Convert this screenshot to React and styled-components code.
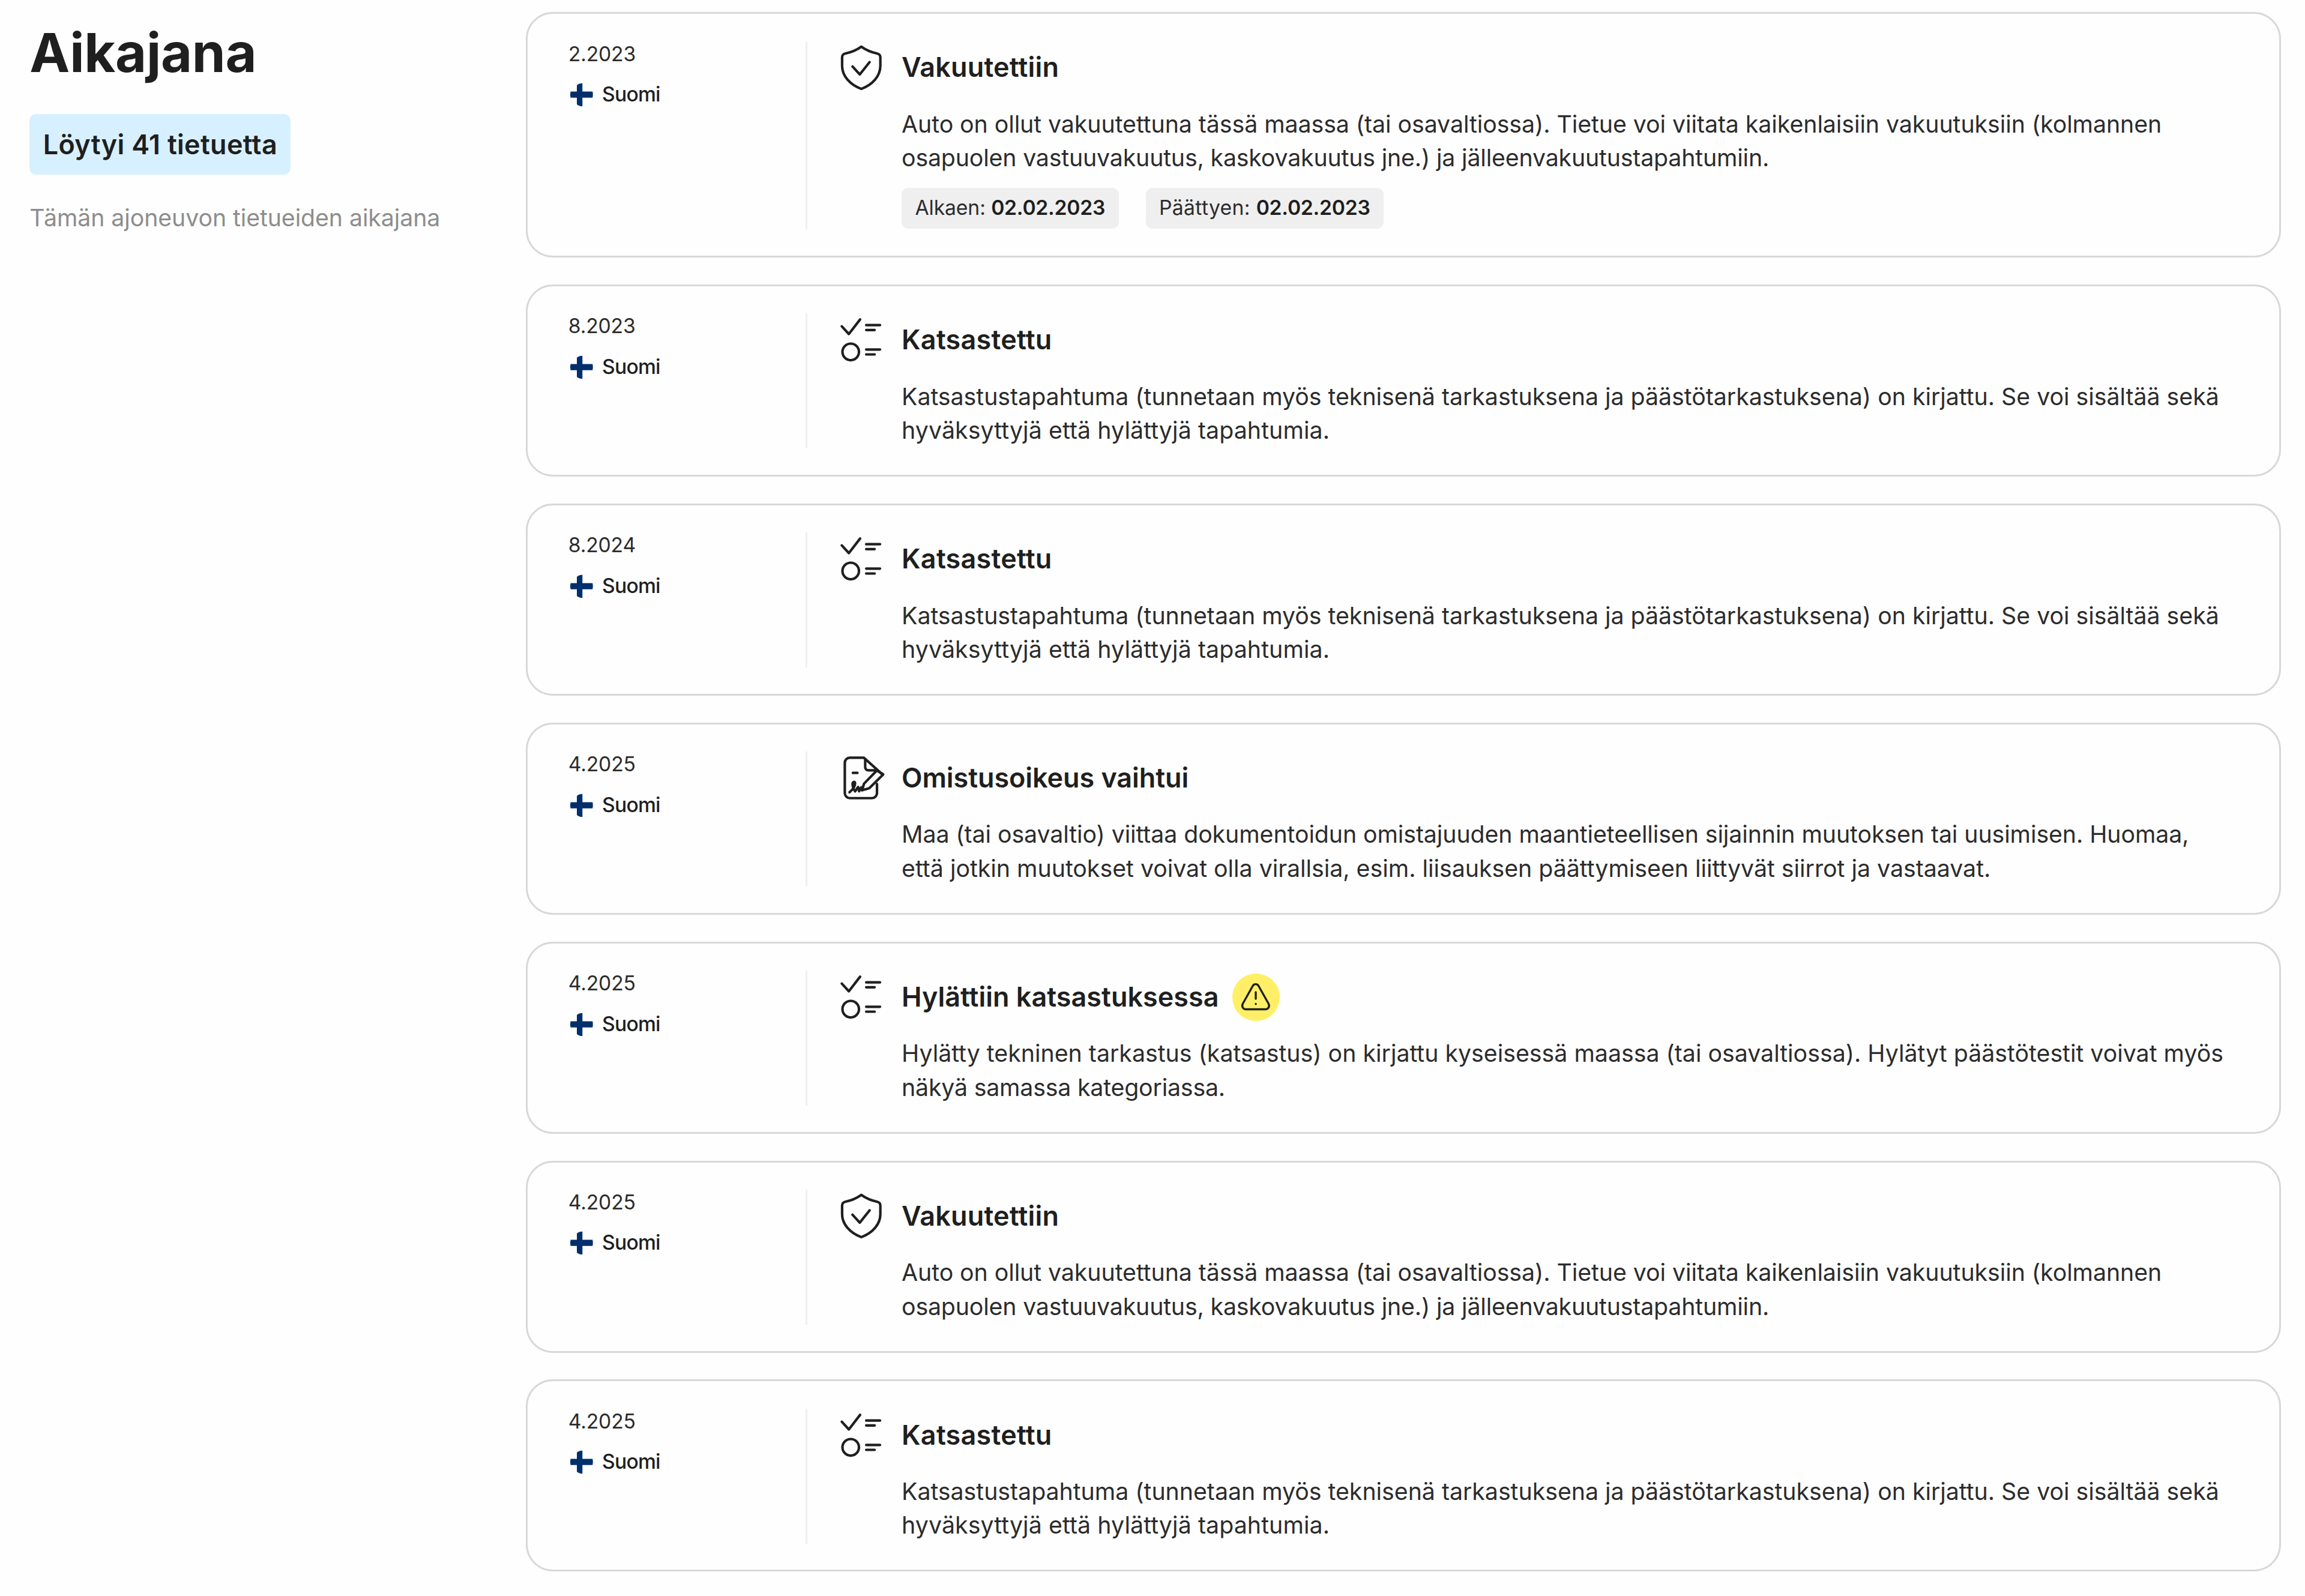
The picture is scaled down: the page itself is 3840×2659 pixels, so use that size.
import React from "react";
import styled, { createGlobalStyle } from "styled-components";

const SCALE = 2.807;
const u = (n) => `${(n * SCALE).toFixed(2)}px`;

const GlobalStyle = createGlobalStyle`
  *, *::before, *::after { box-sizing: border-box; }
  body {
    margin: 0;
    background: #fefefe;
    color: #1f1f1f;
    font-family: Inter, "Liberation Sans", sans-serif;
  }
  h1, h2, p { margin: 0; }
`;

const Page = styled.main`
  display: flex;
  align-items: flex-start;
  min-height: 2659px;
  padding: 20px 40px 0 49.3px;
`;

const Sidebar = styled.aside`
  flex: none;
  display: flex;
  flex-direction: column;
  align-items: flex-start;
  width: 827.2px;
  padding-top: 11.5px;
`;

const PageTitle = styled.h1`
  font-size: ${u(32)};
  line-height: ${u(40)};
  font-weight: 700;
  letter-spacing: -0.3px;
`;

const CountBadge = styled.div`
  margin-top: 46.5px;
  height: ${u(36)};
  padding: 0 ${u(8)};
  border-radius: ${u(4)};
  background: #d7f0ff;
  font-size: ${u(16)};
  line-height: ${u(36)};
  font-weight: 600;
  letter-spacing: 0.3px;
  white-space: nowrap;
`;

const Hint = styled.p`
  margin-top: 43.5px;
  color: #8d8d8d;
  font-size: ${u(14)};
  line-height: ${u(20)};
  letter-spacing: -0.1px;
`;

const Timeline = styled.section`
  flex: 1;
  min-width: 0;
  display: flex;
  flex-direction: column;
  gap: ${u(16)};
`;

const Card = styled.article`
  display: flex;
  padding: 45.6px ${u(24)} 43.9px;
  border: 3px solid #d8d8d8;
  border-radius: ${u(16)};
`;

const Meta = styled.div`
  flex: none;
  display: flex;
  flex-direction: column;
  gap: ${u(8)};
  width: 398px;
  margin-right: ${u(16)};
  border-right: 3px solid #efefef;
`;

const DateText = styled.time`
  color: #2c2c2c;
  font-size: ${u(12)};
  line-height: ${u(15)};
  height: ${u(16)};
  letter-spacing: -0.2px;
`;

const Country = styled.div`
  display: flex;
  gap: ${u(4)};
  font-size: ${u(12)};
  line-height: ${u(15)};
  height: ${u(16)};
  font-weight: 500;
  letter-spacing: -0.8px;
`;

const Content = styled.div`
  flex: 1;
  display: grid;
  grid-template-columns: ${u(32)} 1fr;
  column-gap: ${u(8)};
  row-gap: ${u(8)};
`;

const Heading = styled.div`
  display: flex;
  align-items: center;
  gap: ${u(8)};
  height: ${u(32)};
`;

const CardTitle = styled.h2`
  margin-top: -3px;
  font-size: ${u(16)};
  line-height: ${u(24)};
  font-weight: 600;
  letter-spacing: ${(p) => p.$tracking}px;
`;

const Description = styled.p`
  grid-column: 2;
  margin-top: -2px;
  margin-bottom: 2px;
  color: #2c2c2c;
  font-size: ${u(14)};
  line-height: ${u(20)};
  white-space: nowrap;
`;

const Line = styled.span`
  display: block;
  letter-spacing: ${(p) => p.$tracking}px;
`;

const Chips = styled.div`
  grid-column: 2;
  display: flex;
  gap: ${u(16)};
  margin-top: -2.2px;
  margin-bottom: 1.2px;
`;

const Chip = styled.span`
  height: ${u(24)};
  padding: 0 ${u(8)};
  border-radius: ${u(4)};
  background: #efefef;
  color: #2c2c2c;
  font-size: ${u(12)};
  line-height: ${u(23.4)};
  letter-spacing: ${(p) => p.$tracking}px;
  white-space: nowrap;
  strong {
    color: #1f1f1f;
    font-weight: 600;
    letter-spacing: -0.25px;
  }
`;

const Svg = styled.svg.attrs((p) => ({ viewBox: `0 0 ${p.$size} ${p.$size}` }))`
  flex: none;
  display: block;
  width: ${(p) => u(p.$size)};
  height: ${(p) => u(p.$size)};
  fill: none;
  stroke: #1f1f1f;
  stroke-width: ${(p) => p.$stroke || 1.5};
  stroke-linecap: round;
  stroke-linejoin: round;
`;

const WarningBadge = styled.span`
  display: flex;
  margin-top: -1.5px;
  border-radius: 50%;
  background: #ffef66;
`;

const ShieldIcon = () => (
  <Svg $size={32}>
    <path d="M16 3.1c-2.600 1.900-6.300 3.400-9.600 4.100-1.200.3-1.800 1-1.800 2.200v5.100c0 5.900 4.500 11.100 11.400 13.700 6.900-2.600 11.300-7.800 11.300-13.700V9.400c0-1.200-.6-1.900-1.800-2.200C22.300 6.500 18.600 5 16 3.100Z" />
    <path d="m10.800 14.900 4.300 4.700 5.800-7.300" />
  </Svg>
);

const ChecklistIcon = () => (
  <Svg $size={32}>
    <path d="m4.400 7.700 4.200 4.600 6.700-8.700M18.900 7h8.200M18.900 9.900h5M18.900 21.500h8.200M18.900 24.400h5" />
    <circle cx="9.700" cy="22.900" r="4.900" />
  </Svg>
);

const SignedDocumentIcon = () => (
  <Svg $size={32}>
    <path d="M25.300 19.300v5.400a3 3 0 0 1-3 3H9.200a3 3 0 0 1-3-3V6.700a3 3 0 0 1 3-3h8.300l10.700 9.600" />
    <path d="M18.300 4.600v4.600c0 1.200.8 2 2 2H25" />
    <path d="m25.200 11.300-7.600 7.800-1.100 3.900 4.200-1.200 8.300-8.200Z" />
    <path d="M11 12.700h2.700M9 24.200c2.100-1.700 3.300-3.800 3.300-5.300 0-1.300-1.500-1-1.500.5 0 1.800.7 2.900 1.500 4.300.8-.7 1-2 1.800-2.600l.6 2.500 1.300-2.300.5 1.700" />
  </Svg>
);

const WarningIcon = () => (
  <Svg $size={28} $stroke={1.2}>
    <path d="M12.200 7.200c.8-1.200 2.500-1.200 3.300 0l6 10.700c.8 1.500-.1 3.300-1.900 3.300H8.100c-1.800 0-2.700-1.800-1.900-3.300Z" />
    <path d="M13.900 11v4M13.900 18v.1" />
  </Svg>
);

const FinlandFlag = () => (
  <Svg $size={16}>
    <circle cx="8" cy="7.800" r="7.300" fill="#fff" stroke="#f3f3f3" strokeWidth=".3" />
    <path d="M5 2.100Q6.300 1 8.300 1v4.900h6c.3 1.200.3 2.500 0 3.600h-6v5.100Q6.300 14.600 5 13.500v-4H1.300c-.3-1.100-.3-2.400 0-3.600H5Z" fill="#002f6c" stroke="none" />
  </Svg>
);

const KINDS = {
  insured: {
    title: "Vakuutettiin",
    tracking: 0.2,
    Icon: ShieldIcon,
    lines: [
      ["Auto on ollut vakuutettuna tässä maassa (tai osavaltiossa). Tietue voi viitata kaikenlaisiin vakuutuksiin (kolmannen", -0.07],
      ["osapuolen vastuuvakuutus, kaskovakuutus jne.) ja jälleenvakuutustapahtumiin.", -0.18],
    ],
  },
  inspected: {
    title: "Katsastettu",
    tracking: 0.25,
    Icon: ChecklistIcon,
    lines: [
      ["Katsastustapahtuma (tunnetaan myös teknisenä tarkastuksena ja päästötarkastuksena) on kirjattu. Se voi sisältää sekä", -0.03],
      ["hyväksyttyjä että hylättyjä tapahtumia.", 0.08],
    ],
  },
  ownership: {
    title: "Omistusoikeus vaihtui",
    tracking: -0.05,
    Icon: SignedDocumentIcon,
    lines: [
      ["Maa (tai osavaltio) viittaa dokumentoidun omistajuuden maantieteellisen sijainnin muutoksen tai uusimisen. Huomaa,", -0.09],
      ["että jotkin muutokset voivat olla virallsia, esim. liisauksen päättymiseen liittyvät siirrot ja vastaavat.", -0.02],
    ],
  },
  failed: {
    title: "Hylättiin katsastuksessa",
    tracking: 0.03,
    Icon: ChecklistIcon,
    warning: true,
    lines: [
      ["Hylätty tekninen tarkastus (katsastus) on kirjattu kyseisessä maassa (tai osavaltiossa). Hylätyt päästötestit voivat myös", -0.01],
      ["näkyä samassa kategoriassa.", -0.2],
    ],
  },
};

const EVENTS = [
  {
    date: "2.2023",
    kind: "insured",
    chips: [
      ["Alkaen:", "02.02.2023", -0.1],
      ["Päättyen:", "02.02.2023", 0.35],
    ],
  },
  { date: "8.2023", kind: "inspected" },
  { date: "8.2024", kind: "inspected" },
  { date: "4.2025", kind: "ownership" },
  { date: "4.2025", kind: "failed" },
  { date: "4.2025", kind: "insured" },
  { date: "4.2025", kind: "inspected" },
];

function EventCard({ date, kind, chips }) {
  const { title, tracking, Icon, warning, lines } = KINDS[kind];
  return (
    <Card>
      <Meta>
        <DateText>{date}</DateText>
        <Country>
          <FinlandFlag />
          <span>Suomi</span>
        </Country>
      </Meta>
      <Content>
        <Icon />
        <Heading>
          <CardTitle $tracking={tracking}>{title}</CardTitle>
          {warning && (
            <WarningBadge>
              <WarningIcon />
            </WarningBadge>
          )}
        </Heading>
        <Description>
          {lines.map(([text, lineTracking]) => (
            <Line key={text} $tracking={lineTracking}>
              {text}
            </Line>
          ))}
        </Description>
        {chips && (
          <Chips>
            {chips.map(([label, value, chipTracking]) => (
              <Chip key={label} $tracking={chipTracking}>
                {label} <strong>{value}</strong>
              </Chip>
            ))}
          </Chips>
        )}
      </Content>
    </Card>
  );
}

export default function App() {
  return (
    <>
      <GlobalStyle />
      <Page>
        <Sidebar>
          <PageTitle>Aikajana</PageTitle>
          <CountBadge>Löytyi 41 tietuetta</CountBadge>
          <Hint>Tämän ajoneuvon tietueiden aikajana</Hint>
        </Sidebar>
        <Timeline>
          {EVENTS.map((event, i) => (
            <EventCard key={i} {...event} />
          ))}
        </Timeline>
      </Page>
    </>
  );
}
